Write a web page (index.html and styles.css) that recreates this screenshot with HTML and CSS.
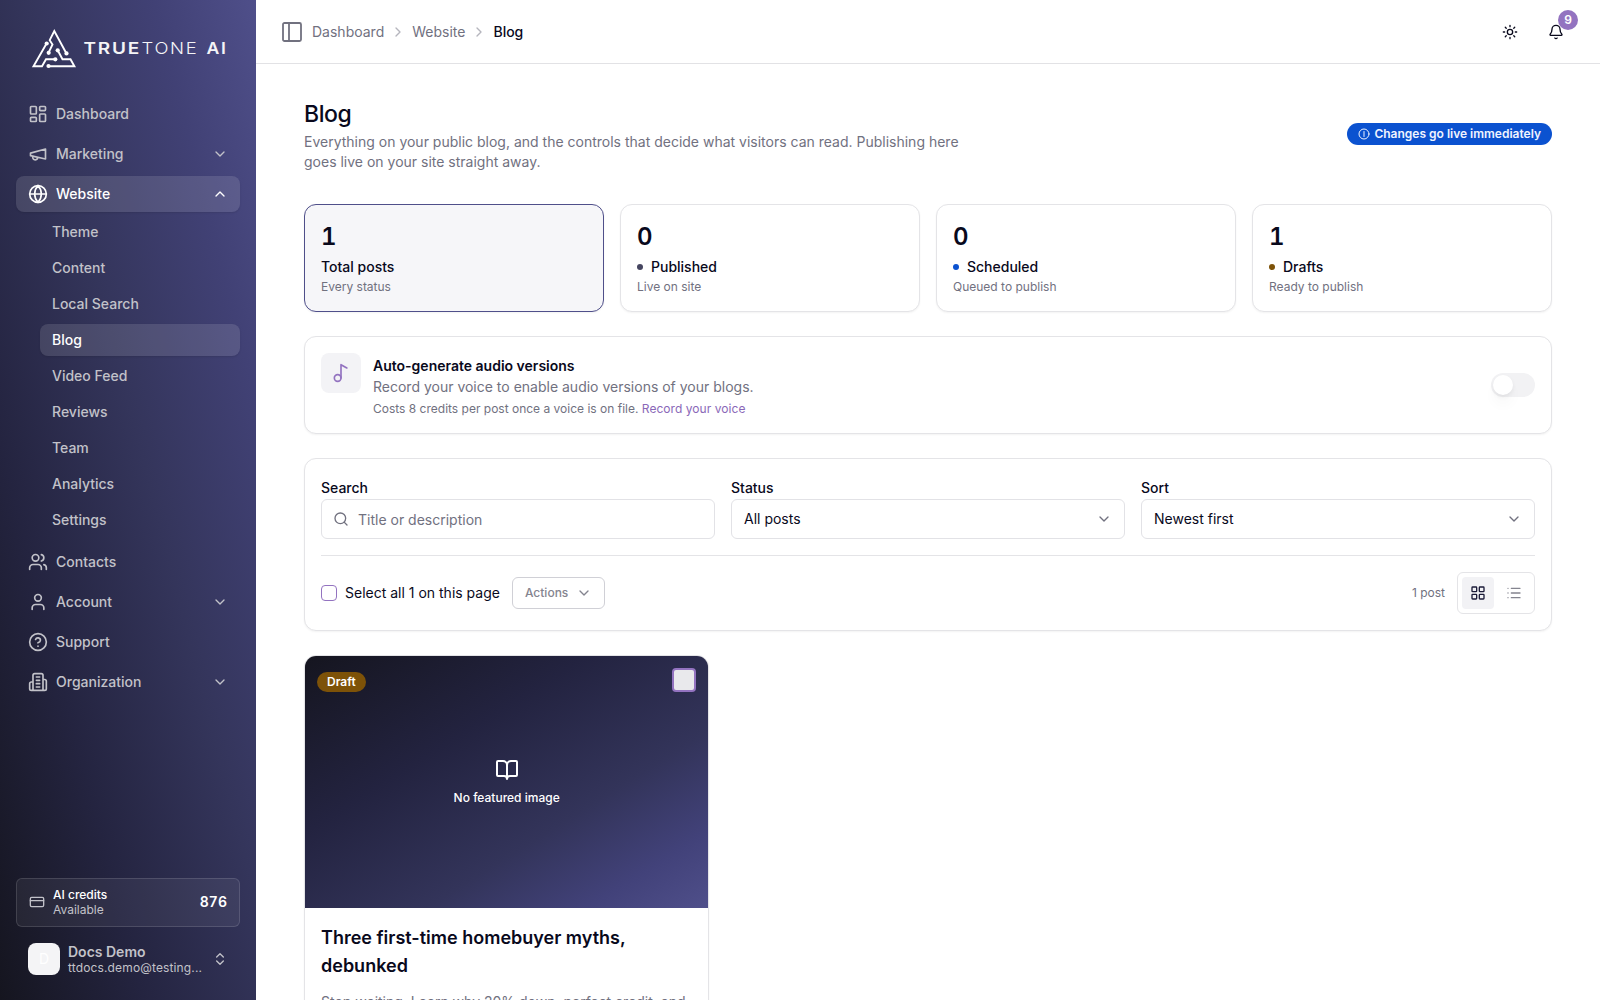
FILE: index.html
```html
<!DOCTYPE html>
<html lang="en">
<head>
<meta charset="utf-8">
<title>Blog - TrueTone AI</title>
<link rel="stylesheet" href="styles.css">
</head>
<body>
<svg class="defs" aria-hidden="true">
  <symbol id="down" viewBox="0 0 24 24"><path d="m6 9 6 6 6-6"/></symbol>
  <symbol id="right" viewBox="0 0 24 24"><path d="m9 18 6-6-6-6"/></symbol>
</svg>
<div class="app">
  <aside class="sidebar">
    <div class="brand">
      <svg class="brand-svg" viewBox="0 0 200 48" width="200" height="48">
        <g fill="none" stroke="#fff" stroke-width="1.9" stroke-linejoin="miter">
          <path d="M18.700 19.300 5.500 42.200H14L18 35.300H27"/>
          <path d="M20.700 28.300 24.500 20.500 21.700 16.200 26.300 7 38.300 29.300"/>
          <path d="M29.700 26.300 34.500 35.300H42.500L46.400 42.200H20.300"/>
        </g>
        <g fill="#fff">
          <circle cx="18.700" cy="19.500" r="2.100"/><circle cx="20.700" cy="28.800" r="2.100"/><circle cx="29.700" cy="26.300" r="2.100"/>
          <circle cx="38.500" cy="29.400" r="2.100"/><circle cx="27.300" cy="35.300" r="2.100"/><circle cx="20.500" cy="42" r="2.100"/>
        </g>
        <text class="wm bold" x="55.500" y="30" textLength="57.500" lengthAdjust="spacingAndGlyphs">TRUE</text>
        <text class="wm light" x="113.500" y="30" textLength="57" lengthAdjust="spacingAndGlyphs">TONE</text>
        <text class="wm bold" x="178.500" y="30" textLength="21" lengthAdjust="spacingAndGlyphs">AI</text>
      </svg>
    </div>
    <nav class="nav">
      <a class="item"><svg class="ic i20" viewBox="0 0 24 24"><rect x="3" y="3" width="7" height="9" rx="1"/><rect x="14" y="3" width="7" height="5" rx="1"/><rect x="14" y="12" width="7" height="9" rx="1"/><rect x="3" y="16" width="7" height="5" rx="1"/></svg><span>Dashboard</span></a>
      <a class="item"><svg class="ic i20" viewBox="0 0 24 24"><path d="m3 11 18-5v12L3 14v-3z"/><path d="M11.600 16.800a3 3 0 1 1-5.800-1.600"/></svg><span>Marketing</span><svg class="ic i16"><use href="#down"/></svg></a>
      <a class="item active"><svg class="ic i20" viewBox="0 0 24 24"><circle cx="12" cy="12" r="10"/><path d="M12 2a14.500 14.500 0 0 0 0 20 14.500 14.500 0 0 0 0-20M2 12h20"/></svg><span>Website</span><svg class="ic i16" viewBox="0 0 24 24"><path d="m18 15-6-6-6 6"/></svg></a>
      <div class="sub">
        <a>Theme</a><a>Content</a><a>Local Search</a><a class="active">Blog</a><a>Video Feed</a><a>Reviews</a><a>Team</a><a>Analytics</a><a>Settings</a>
      </div>
      <a class="item"><svg class="ic i20" viewBox="0 0 24 24"><path d="M16 21v-2a4 4 0 0 0-4-4H6a4 4 0 0 0-4 4v2"/><circle cx="9" cy="7" r="4"/><path d="M22 21v-2a4 4 0 0 0-3-3.870M16 3.130a4 4 0 0 1 0 7.750"/></svg><span>Contacts</span></a>
      <a class="item"><svg class="ic i20" viewBox="0 0 24 24"><path d="M19 21v-2a4 4 0 0 0-4-4H9a4 4 0 0 0-4 4v2"/><circle cx="12" cy="7" r="4"/></svg><span>Account</span><svg class="ic i16"><use href="#down"/></svg></a>
      <a class="item"><svg class="ic i20" viewBox="0 0 24 24"><circle cx="12" cy="12" r="10"/><path d="M9.090 9a3 3 0 0 1 5.830 1c0 2-3 3-3 3M12 17h.01"/></svg><span>Support</span></a>
      <a class="item"><svg class="ic i20" viewBox="0 0 24 24"><path d="M6 22V4a2 2 0 0 1 2-2h8a2 2 0 0 1 2 2v18ZM6 12H4a2 2 0 0 0-2 2v6a2 2 0 0 0 2 2h2M18 9h2a2 2 0 0 1 2 2v9a2 2 0 0 1-2 2h-2M10 6h4M10 10h4M10 14h4M10 18h4"/></svg><span>Organization</span><svg class="ic i16"><use href="#down"/></svg></a>
    </nav>
    <div class="foot">
      <div class="credits">
        <svg class="ic i16" viewBox="0 0 24 24"><rect x="2" y="5" width="20" height="14" rx="2"/><path d="M2 10h20"/></svg>
        <div class="two"><span class="t1">AI credits</span><span class="t2">Available</span></div>
        <b>876</b>
      </div>
      <div class="user">
        <div class="avatar">D</div>
        <div class="who"><span class="name">Docs Demo</span><span class="mail">ttdocs.demo@testing...</span></div>
        <svg class="ic i16" viewBox="0 0 24 24"><path d="m7 15 5 5 5-5M7 9l5-5 5 5"/></svg>
      </div>
    </div>
  </aside>
  <div class="page">
    <header class="top">
      <svg class="ic toggle-side" viewBox="0 0 20 20"><rect x="1" y="1" width="18" height="18" rx="1.500"/><path d="M7 1v18"/></svg>
      <div class="crumbs"><span>Dashboard</span><svg class="ic i16"><use href="#right"/></svg><span>Website</span><svg class="ic i16"><use href="#right"/></svg><span class="here">Blog</span></div>
      <div class="tools">
        <svg class="ic i16" viewBox="0 0 24 24"><circle cx="12" cy="12" r="4"/><path d="M12 2v2M12 20v2M4.930 4.930l1.410 1.410M17.660 17.660l1.410 1.410M2 12h2M20 12h2M6.340 17.660l-1.410 1.410M19.070 4.930l-1.410 1.410"/></svg>
        <div class="bell"><svg class="ic i16" viewBox="0 0 24 24"><path d="M10.270 21a2 2 0 0 0 3.460 0M3.260 15.330A1 1 0 0 0 4 17h16a1 1 0 0 0 .740-1.670C19.410 13.960 18 12.500 18 8A6 6 0 0 0 6 8c0 4.500-1.410 5.960-2.740 7.330"/></svg><span class="count">9</span></div>
      </div>
    </header>
    <main class="main">
      <div class="intro">
        <div class="intro-text"><h1>Blog</h1><p>Everything on your public blog, and the controls that decide what visitors can read. Publishing here goes live on your site straight away.</p></div>
        <span class="pill"><svg class="ic i12" viewBox="0 0 24 24"><circle cx="12" cy="12" r="10"/><path d="M12 7v10"/></svg>Changes go live immediately</span>
      </div>
      <section class="stats">
        <div class="card stat sel"><strong>1</strong><span class="lab">Total posts</span><small>Every status</small></div>
        <div class="card stat"><strong>0</strong><span class="lab"><i class="dot pub"></i>Published</span><small>Live on site</small></div>
        <div class="card stat"><strong>0</strong><span class="lab"><i class="dot sch"></i>Scheduled</span><small>Queued to publish</small></div>
        <div class="card stat"><strong>1</strong><span class="lab"><i class="dot dra"></i>Drafts</span><small>Ready to publish</small></div>
      </section>
      <section class="card audio">
        <div class="note"><svg class="ic i20" viewBox="0 0 24 24"><circle cx="8" cy="18" r="4"/><path d="M12 18V2l7 4"/></svg></div>
        <div class="audio-text"><span class="at">Auto-generate audio versions</span><span class="ad">Record your voice to enable audio versions of your blogs.</span><span class="ac">Costs 8 credits per post once a voice is on file. <a>Record your voice</a></span></div>
        <div class="switch"><div class="knob"></div></div>
      </section>
      <section class="card filters">
        <div class="fields">
          <div class="field"><label>Search</label><div class="box search"><svg class="ic i16" viewBox="0 0 24 24"><circle cx="11" cy="11" r="8"/><path d="m21 21-4.300-4.300"/></svg><span>Title or description</span></div></div>
          <div class="field"><label>Status</label><div class="box"><span>All posts</span><svg class="ic i16"><use href="#down"/></svg></div></div>
          <div class="field"><label>Sort</label><div class="box"><span>Newest first</span><svg class="ic i16"><use href="#down"/></svg></div></div>
        </div>
        <div class="bulk">
          <span class="check"></span><span class="selall">Select all 1 on this page</span>
          <div class="actions">Actions<svg class="ic i16"><use href="#down"/></svg></div>
          <span class="num">1 post</span>
          <div class="views">
            <span class="view on"><svg class="ic i16" viewBox="0 0 24 24"><rect x="3" y="3" width="7" height="7" rx="1"/><rect x="14" y="3" width="7" height="7" rx="1"/><rect x="14" y="14" width="7" height="7" rx="1"/><rect x="3" y="14" width="7" height="7" rx="1"/></svg></span>
            <span class="view"><svg class="ic i16" viewBox="0 0 24 24"><path d="M3 5h.01M3 12h.01M3 19h.01M8 5h13M8 12h13M8 19h13"/></svg></span>
          </div>
        </div>
      </section>
      <section class="posts">
        <article class="card post">
          <div class="cover">
            <svg class="ic i24" viewBox="0 0 24 24"><path d="M12 7v14M3 18a1 1 0 0 1-1-1V4a1 1 0 0 1 1-1h5a4 4 0 0 1 4 4 4 4 0 0 1 4-4h5a1 1 0 0 1 1 1v13a1 1 0 0 1-1 1h-6a3 3 0 0 0-3 3 3 3 0 0 0-3-3z"/></svg>
            <span>No featured image</span>
            <span class="draft">Draft</span><span class="pick"></span>
          </div>
          <div class="body"><h2>Three first-time homebuyer myths, debunked</h2><p>Stop waiting. Learn why 20% down, perfect credit, and</p></div>
        </article>
      </section>
    </main>
  </div>
</div>
</body>
</html>
```
FILE: styles.css
```css
* { box-sizing: border-box; }
body { margin: 0; font-family: Inter, sans-serif; font-size: 14px; line-height: 20px; color: #09091c; background: #fff; }
.defs { position: absolute; width: 0; height: 0; }
.app { display: flex; height: 1000px; overflow: hidden; }
.ic { fill: none; stroke: currentColor; stroke-width: 2; stroke-linecap: round; stroke-linejoin: round; flex: none; }
.i12 { width: 12px; height: 12px; }
.i16 { width: 16px; height: 16px; }
.i20 { width: 20px; height: 20px; }
.i24 { width: 24px; height: 24px; }

.sidebar { width: 256px; flex: none; display: flex; flex-direction: column; padding: 24px 16px 17px; color: #c2c2c9; background: linear-gradient(to top right, #15151f 0%, #242440 28%, #34355b 55%, #414175 80%, #4f4f8a 100%); }
.brand { height: 72px; padding-left: 12px; }
.brand-svg { display: block; }
.wm { font-size: 16px; fill: #f4f4f7; letter-spacing: 1.5px; }
.wm.bold { font-weight: 600; }
.wm.light { font-weight: 300; }
.nav { flex: 1; display: flex; flex-direction: column; gap: 4px; font-weight: 500; }
.item { height: 36px; display: flex; align-items: center; gap: 8px; padding: 0 12px; border-radius: 8px; }
.item span { flex: 1; }
.active { color: #fff; background: rgba(255, 255, 255, .12); box-shadow: 0 1px 2px rgba(0, 0, 0, .1); }
.sub { display: flex; flex-direction: column; gap: 4px; padding: 0 0 4px 24px; }
.sub a { height: 32px; line-height: 32px; padding-left: 12px; border-radius: 8px; }
.foot { display: flex; flex-direction: column; gap: 8px; }
.credits { height: 49px; display: flex; align-items: center; gap: 8px; padding: 0 12px 2px; border: 1px solid rgba(255, 255, 255, .13); border-radius: 6px; background: rgba(255, 255, 255, .06); }
.two { flex: 1; display: flex; flex-direction: column; font-size: 12px; line-height: 15px; }
.t1 { color: #fff; font-weight: 500; }
.credits b { color: #fff; font-weight: 600; font-variant-numeric: tabular-nums; }
.user { height: 48px; display: flex; align-items: center; gap: 8px; padding: 0 12px; }
.avatar { width: 32px; height: 32px; border-radius: 8px; background: #f4f4f6; color: #fff; text-align: center; line-height: 32px; }
.who { flex: 1; min-width: 0; display: flex; flex-direction: column; }
.name { font-weight: 600; line-height: 17px; }
.mail { font-size: 12px; line-height: 15px; letter-spacing: .14px; white-space: nowrap; }

.page { flex: 1; min-width: 0; }
.top { height: 64px; display: flex; align-items: center; padding: 0 36px 0 26px; border-bottom: 1px solid #e2e2e5; color: #71717f; }
.toggle-side { width: 20px; height: 20px; stroke-width: 1.800; margin-right: 10px; }
.crumbs { display: flex; align-items: center; gap: 6px; }
.crumbs svg { color: #b5b5bd; }
.here { color: #09091c; font-weight: 500; }
.tools { margin-left: auto; display: flex; gap: 30px; color: #09091c; }
.bell { position: relative; display: flex; }
.count { position: absolute; left: 10px; top: -14px; width: 20px; height: 20px; border-radius: 50%; background: #9373c0; color: #fff; font-size: 12px; line-height: 19px; font-weight: 600; text-align: center; }
.main { padding: 32px 48px; display: flex; flex-direction: column; gap: 24px; }
.intro { display: flex; align-items: center; justify-content: space-between; margin-bottom: 8px; }
.intro-text { width: 672px; }
h1 { margin: 0; padding-top: 3px; height: 36px; font-size: 23px; line-height: 30px; font-weight: 450; letter-spacing: -.4px; }
.intro p { margin: 0; color: #71717f; }
.pill { display: flex; align-items: center; gap: 4px; height: 22px; padding: 0 11px; border-radius: 11px; background: #0b52d0; color: #f0f4ff; font-size: 12px; font-weight: 600; }
.card { border: 1px solid #e4e4e7; border-radius: 12px; background: #fff; box-shadow: 0 1px 2px rgba(0, 0, 0, .05); }
.stats { display: grid; grid-template-columns: repeat(4, 1fr); gap: 16px; }
.stat { padding: 16px; height: 108px; display: flex; flex-direction: column; }
.stat.sel { background: #f6f6f9; border-color: #4f4f8a; }
.stat strong { font-size: 24px; line-height: 32px; font-weight: 600; margin-bottom: 4px; font-variant-numeric: tabular-nums; }
.lab { display: flex; align-items: center; gap: 8px; font-weight: 500; margin-bottom: 2px; }
.dot { width: 6px; height: 6px; border-radius: 50%; }
.pub { background: #464660; }
.sch { background: #0b52d0; }
.dra { background: #7d5208; }
small { font-size: 12px; line-height: 16px; color: #71717f; }
.audio { display: flex; gap: 12px; padding: 16px; height: 98px; }
.note { width: 40px; height: 40px; border-radius: 8px; background: #f3f3f6; color: #9373c0; display: grid; place-items: center; }
.audio-text { flex: 1; display: flex; flex-direction: column; padding-top: 3px; }
.at { font-weight: 600; margin-bottom: 1px; }
.ad { color: #71717f; margin-bottom: 4px; }
.ac { color: #71717f; font-size: 12px; line-height: 16px; }
.ac a { color: #8a68b8; letter-spacing: .05px; }
.switch { align-self: center; width: 44px; height: 24px; padding: 2px; border-radius: 12px; background: #f2f2f4; }
.knob { width: 20px; height: 20px; border-radius: 50%; background: #fff; box-shadow: 0 10px 15px -3px rgba(0, 0, 0, .06), 0 2px 4px rgba(0, 0, 0, .06); }
.filters { padding: 16px; }
.fields { display: grid; grid-template-columns: repeat(3, 1fr); gap: 16px; padding-bottom: 16px; border-bottom: 1px solid #e4e4e7; }
.field label { display: block; height: 24px; line-height: 26px; font-weight: 500; }
.box { height: 40px; display: flex; align-items: center; justify-content: space-between; padding: 0 12px; border: 1px solid #e2e2e6; border-radius: 6px; }
.box svg { color: #71717f; }
.search { justify-content: flex-start; gap: 9px; color: #71717f; padding-left: 11px; }
.search span { padding-top: 2px; }
.bulk { display: flex; align-items: center; padding-top: 16px; }
.check { width: 16px; height: 16px; border: 1px solid #9373c0; border-radius: 4px; margin-right: 8px; }
.actions { height: 32px; display: flex; align-items: center; gap: 8px; margin-left: 12px; padding: 0 12px; border: 1px solid #d0d0d6; border-radius: 6px; font-size: 12px; font-weight: 500; color: #84848f; }
.num { margin-left: auto; margin-right: 12px; color: #71717f; font-size: 12px; }
.views { display: flex; gap: 4px; padding: 4px; border: 1px solid #e4e4e7; border-radius: 6px; }
.view { width: 32px; height: 32px; border-radius: 4px; display: grid; place-items: center; color: #84848f; }
.view.on { background: #f2f2f5; color: #1b1b38; }
.posts { display: grid; grid-template-columns: repeat(3, 1fr); gap: 16px; }
.post { overflow: hidden; }
.cover { position: relative; height: 252px; display: flex; flex-direction: column; align-items: center; justify-content: center; gap: 6px; padding-top: 2px; color: #fff; font-size: 12px; font-weight: 500; background: linear-gradient(to bottom right, #15151f 0%, #232340 35%, #33345a 65%, #42427a 85%, #4f4f8a 100%); }
.draft { position: absolute; left: 12px; top: 16px; height: 20px; padding: 0 10px; border-radius: 10px; background: #7d5208; font-weight: 600; }
.pick { position: absolute; right: 12px; top: 12px; width: 24px; height: 24px; border: 2px solid #9373c0; border-radius: 4px; background: #e9e9ec; }
.body { padding: 16px; }
h2 { margin: 0 0 12px; font-size: 18px; line-height: 28px; font-weight: 600; }
.body p { margin: 0; color: #71717f; white-space: nowrap; }
```
